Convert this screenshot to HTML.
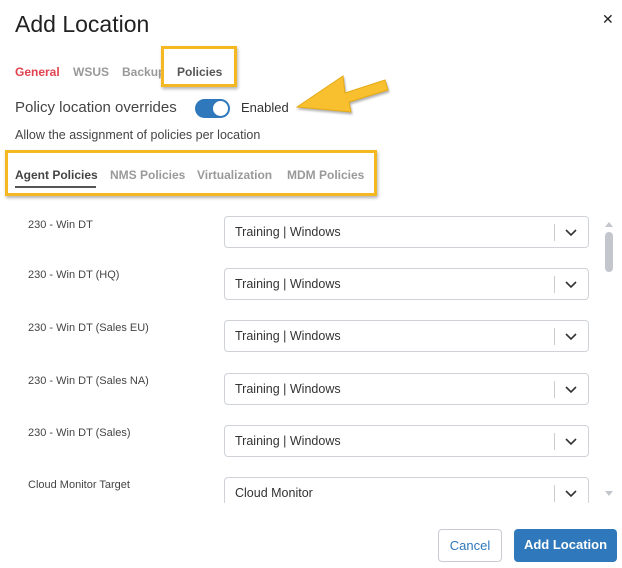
<html><head><style>
body{margin:0;width:622px;height:568px;background:#fff;font-family:"Liberation Sans",sans-serif;position:relative;overflow:hidden;color:#333}
.a{position:absolute}
.lbl{position:absolute;left:28px;font-size:11px;color:#444}
.sel{position:absolute;left:224px;width:365px;height:32px;border:1px solid #cfd3d8;border-radius:4px;box-sizing:border-box;font-size:12.5px;color:#333}
.sel span{position:absolute;left:10px;top:8px}
.sel i{position:absolute;right:33px;top:7px;width:1px;height:17px;background:#ccc}
.sel svg{position:absolute;right:11px;top:12px}
</style></head><body>
<div class="a" style="left:15px;top:11px;font-size:23px;color:#222">Add Location</div>
<div class="a" style="left:602px;top:11px;font-size:14px;color:#222">✕</div>
<div class="a" style="top:65px;left:15px;font-size:12px;font-weight:bold;color:#e0424e">General</div>
<div class="a" style="top:65px;left:73px;font-size:12px;font-weight:bold;color:#999">WSUS</div>
<div class="a" style="top:65px;left:122px;font-size:12px;font-weight:bold;color:#999;width:39px;overflow:hidden;white-space:nowrap">Backup</div>
<div class="a" style="left:161px;top:46px;width:76px;height:41px;border:3px solid #f5b820;box-sizing:border-box;box-shadow:1px 2px 3px rgba(0,0,0,.3)"></div>
<div class="a" style="top:65px;left:177px;font-size:12px;font-weight:bold;color:#555">Policies</div>
<div class="a" style="top:99px;left:15px;font-size:15px;color:#444">Policy location overrides</div>
<div class="a" style="left:195px;top:99px;width:35px;height:19px;border-radius:10px;background:#2f78bb"></div>
<div class="a" style="left:213px;top:101px;width:15px;height:15px;border-radius:50%;background:#fff"></div>
<div class="a" style="top:100px;left:241px;font-size:13px;color:#333">Enabled</div>
<svg class="a" style="left:0;top:0" width="622" height="140"><polygon points="297,107 343,76 345,93 385,80 388,90 349,102 351,112" fill="#f8c02e" stroke="#e5aa15" stroke-width="1" style="filter:drop-shadow(1px 2px 1px rgba(0,0,0,.3))"/></svg>
<div class="a" style="top:128px;left:15px;font-size:12.5px;color:#444">Allow the assignment of policies per location</div>
<div class="a" style="left:5px;top:150px;width:372px;height:46px;border:3px solid #f5b820;box-sizing:border-box;box-shadow:1px 2px 3px rgba(0,0,0,.3)"></div>
<div class="a" style="top:168px;left:15px;font-size:12px;font-weight:bold;color:#444">Agent Policies</div>
<div class="a" style="top:186px;left:15px;width:81px;height:2px;background:#555"></div>
<div class="a" style="top:168px;left:110px;font-size:12px;font-weight:bold;color:#999">NMS Policies</div>
<div class="a" style="top:168px;left:197px;font-size:12px;font-weight:bold;color:#999">Virtualization</div>
<div class="a" style="top:168px;left:287px;font-size:12px;font-weight:bold;color:#999">MDM Policies</div>

<div class="a" style="left:0;top:205px;width:600px;height:298px;overflow:hidden">
<div class="lbl" style="top:14px">230 - Win DT</div>
<div class="sel" style="top:11px"><span>Training | Windows</span><i></i><svg width="12" height="8"><path d="M1 1l5 5 5-5" fill="none" stroke="#333" stroke-width="1.6"/></svg></div>
<div class="lbl" style="top:64px">230 - Win DT (HQ)</div>
<div class="sel" style="top:63px"><span>Training | Windows</span><i></i><svg width="12" height="8"><path d="M1 1l5 5 5-5" fill="none" stroke="#333" stroke-width="1.6"/></svg></div>
<div class="lbl" style="top:117px">230 - Win DT (Sales EU)</div>
<div class="sel" style="top:115px"><span>Training | Windows</span><i></i><svg width="12" height="8"><path d="M1 1l5 5 5-5" fill="none" stroke="#333" stroke-width="1.6"/></svg></div>
<div class="lbl" style="top:170px">230 - Win DT (Sales NA)</div>
<div class="sel" style="top:168px"><span>Training | Windows</span><i></i><svg width="12" height="8"><path d="M1 1l5 5 5-5" fill="none" stroke="#333" stroke-width="1.6"/></svg></div>
<div class="lbl" style="top:222px">230 - Win DT (Sales)</div>
<div class="sel" style="top:220px"><span>Training | Windows</span><i></i><svg width="12" height="8"><path d="M1 1l5 5 5-5" fill="none" stroke="#333" stroke-width="1.6"/></svg></div>
<div class="lbl" style="top:274px">Cloud Monitor Target</div>
<div class="sel" style="top:272px"><span>Cloud Monitor</span><i></i><svg width="12" height="8"><path d="M1 1l5 5 5-5" fill="none" stroke="#333" stroke-width="1.6"/></svg></div>
</div>
<svg class="a" style="left:603px;top:219px" width="12" height="282"><path d="M2 8l4-5 4 5z" fill="#c3c6cc"/><rect x="2" y="13" width="8" height="40" rx="4" fill="#c3c6cc"/><path d="M2 272l4 5 4-5z" fill="#c3c6cc"/></svg>
<div class="a" style="left:438px;top:529px;width:64px;height:33px;border:1px solid #c8ccd2;border-radius:4px;box-sizing:border-box;font-size:13px;color:#2f78bb;text-align:center;line-height:31px">Cancel</div>
<div class="a" style="left:514px;top:529px;width:103px;height:33px;border-radius:4px;background:#2f78bb;font-size:13px;font-weight:bold;color:#fff;text-align:center;line-height:31px">Add Location</div>
</body></html>
